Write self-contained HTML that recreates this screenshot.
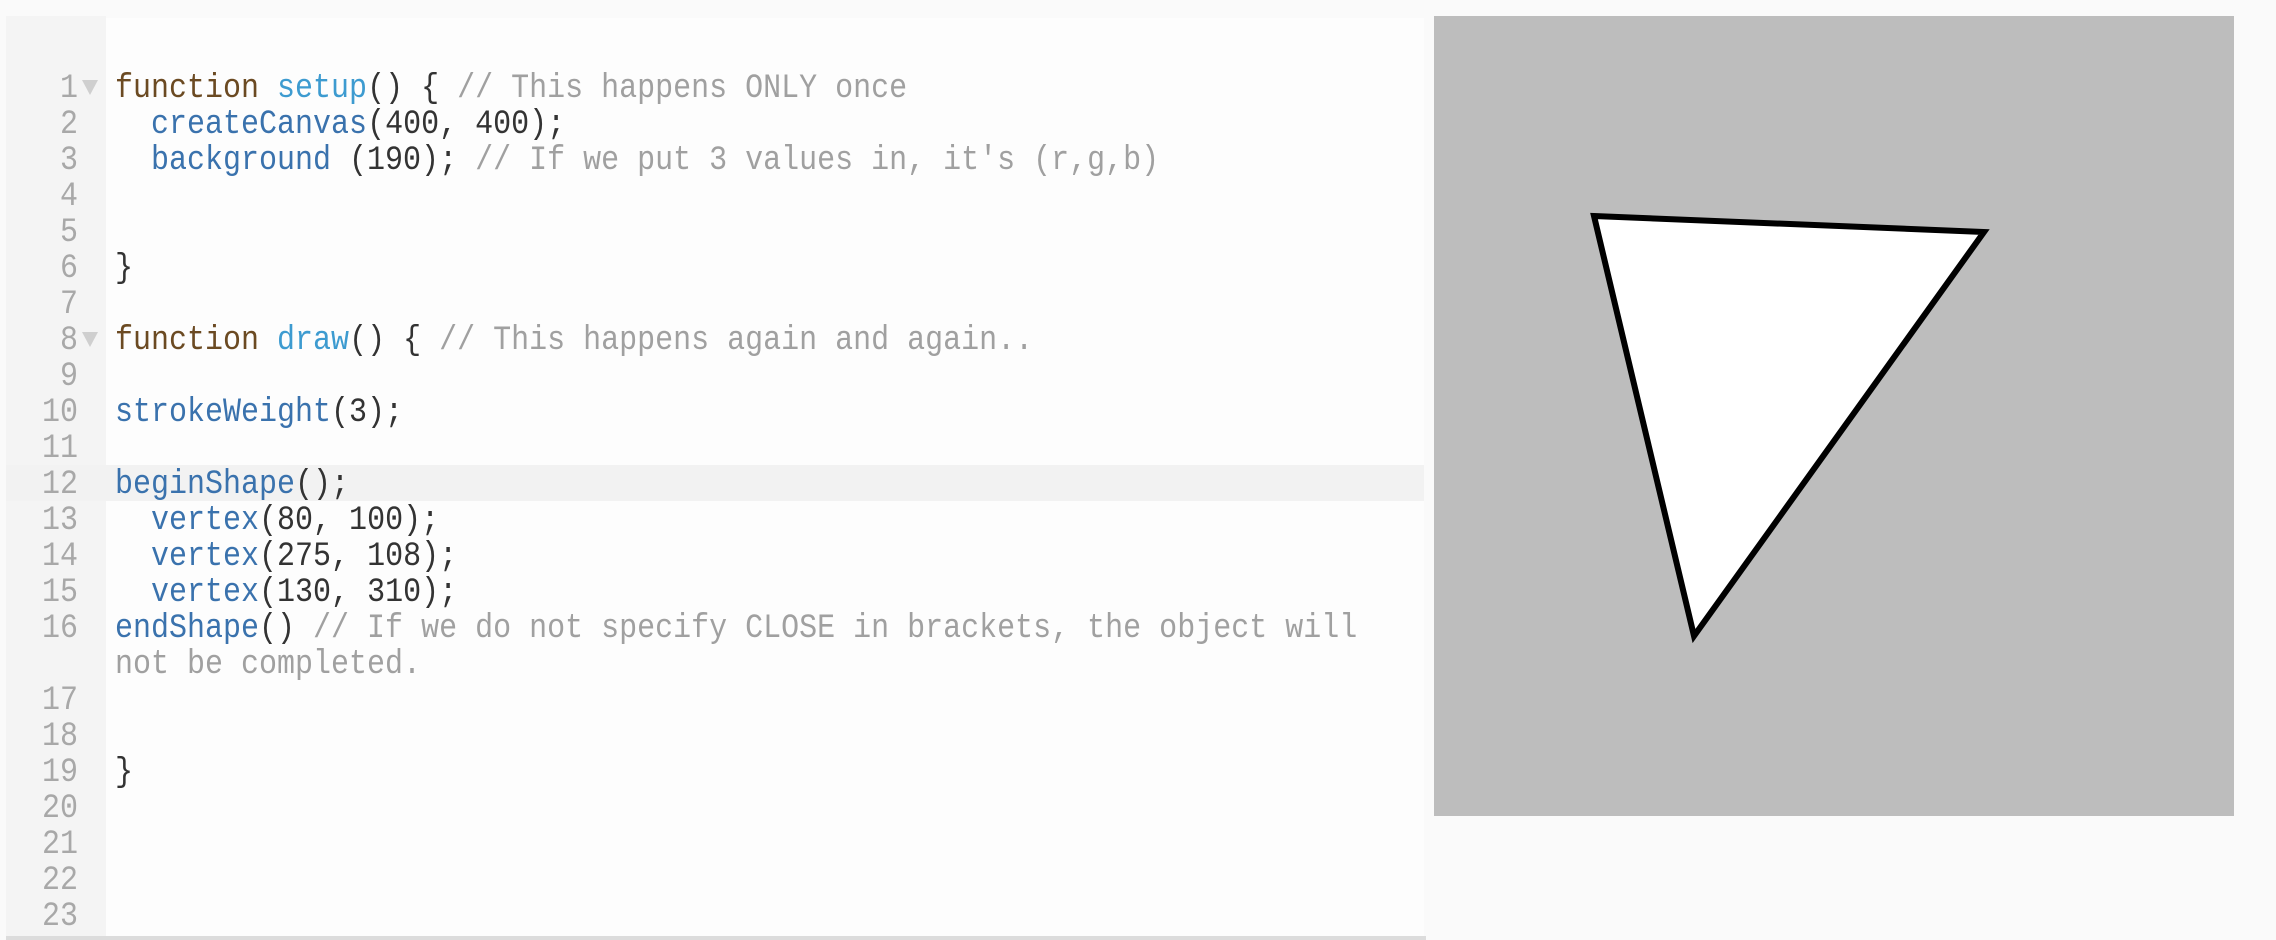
<!DOCTYPE html>
<html><head><meta charset="utf-8"><style>
html,body{margin:0;padding:0;width:2276px;height:940px;background:#fafafa;overflow:hidden}
.gut{position:absolute;left:6px;top:16px;width:100px;height:920px;background:#f4f4f4}
.ed{position:absolute;left:106px;top:18px;width:1318px;height:918px;background:#fdfdfd}
.hl{position:absolute;left:6px;top:465px;width:1418px;height:36px;background:#f2f2f2}
.bot{position:absolute;left:6px;top:936px;width:1420px;height:4px;background:#dcdcdc}
.ln,.c{position:absolute;font-family:"Liberation Mono",monospace;font-size:30px;line-height:36px;white-space:pre;margin-top:2px;transform:scaleY(1.14);transform-origin:0 50%}
.ln{left:0;width:78px;text-align:right;color:#a8a8a8}
.c{left:115px;color:#333}
.k{color:#6b4a22}.f{color:#3d9bd0}.b{color:#3a72ad}.m{color:#a0a0a0}
.fold{position:absolute;left:82px;width:0;height:0;border-left:8px solid transparent;border-right:8px solid transparent;border-top:15px solid #cfcfcf}
.cv{position:absolute;left:1434px;top:16px;width:800px;height:800px;background:#bdbdbd}
</style></head><body>
<div class="gut"></div><div class="ed"></div><div class="hl"></div><div class="bot"></div>
<div class="fold" style="top:80px"></div><div class="fold" style="top:332px"></div>
<div class="ln" style="top:69px">1</div><div class="ln" style="top:105px">2</div><div class="ln" style="top:141px">3</div><div class="ln" style="top:177px">4</div><div class="ln" style="top:213px">5</div><div class="ln" style="top:249px">6</div><div class="ln" style="top:285px">7</div><div class="ln" style="top:321px">8</div><div class="ln" style="top:357px">9</div><div class="ln" style="top:393px">10</div><div class="ln" style="top:429px">11</div><div class="ln" style="top:465px">12</div><div class="ln" style="top:501px">13</div><div class="ln" style="top:537px">14</div><div class="ln" style="top:573px">15</div><div class="ln" style="top:609px">16</div><div class="ln" style="top:681px">17</div><div class="ln" style="top:717px">18</div><div class="ln" style="top:753px">19</div><div class="ln" style="top:789px">20</div><div class="ln" style="top:825px">21</div><div class="ln" style="top:861px">22</div><div class="ln" style="top:897px">23</div>
<div class="c" style="top:69px"><span class="k">function</span> <span class="f">setup</span>() { <span class="m">// This happens ONLY once</span></div>
<div class="c" style="top:105px">  <span class="b">createCanvas</span>(400, 400);</div>
<div class="c" style="top:141px">  <span class="b">background</span> (190); <span class="m">// If we put 3 values in, it's (r,g,b)</span></div>
<div class="c" style="top:249px">}</div>
<div class="c" style="top:321px"><span class="k">function</span> <span class="f">draw</span>() { <span class="m">// This happens again and again..</span></div>
<div class="c" style="top:393px"><span class="b">strokeWeight</span>(3);</div>
<div class="c" style="top:465px"><span class="b">beginShape</span>();</div>
<div class="c" style="top:501px">  <span class="b">vertex</span>(80, 100);</div>
<div class="c" style="top:537px">  <span class="b">vertex</span>(275, 108);</div>
<div class="c" style="top:573px">  <span class="b">vertex</span>(130, 310);</div>
<div class="c" style="top:609px"><span class="b">endShape</span>() <span class="m">// If we do not specify CLOSE in brackets, the object will</span></div>
<div class="c" style="top:645px"><span class="m">not be completed.</span></div>
<div class="c" style="top:753px">}</div>
<div class="cv"><svg width="800" height="800"><polygon points="160,200 550,216 260,620" fill="#fff" stroke="#000" stroke-width="6"/></svg></div>
</body></html>
